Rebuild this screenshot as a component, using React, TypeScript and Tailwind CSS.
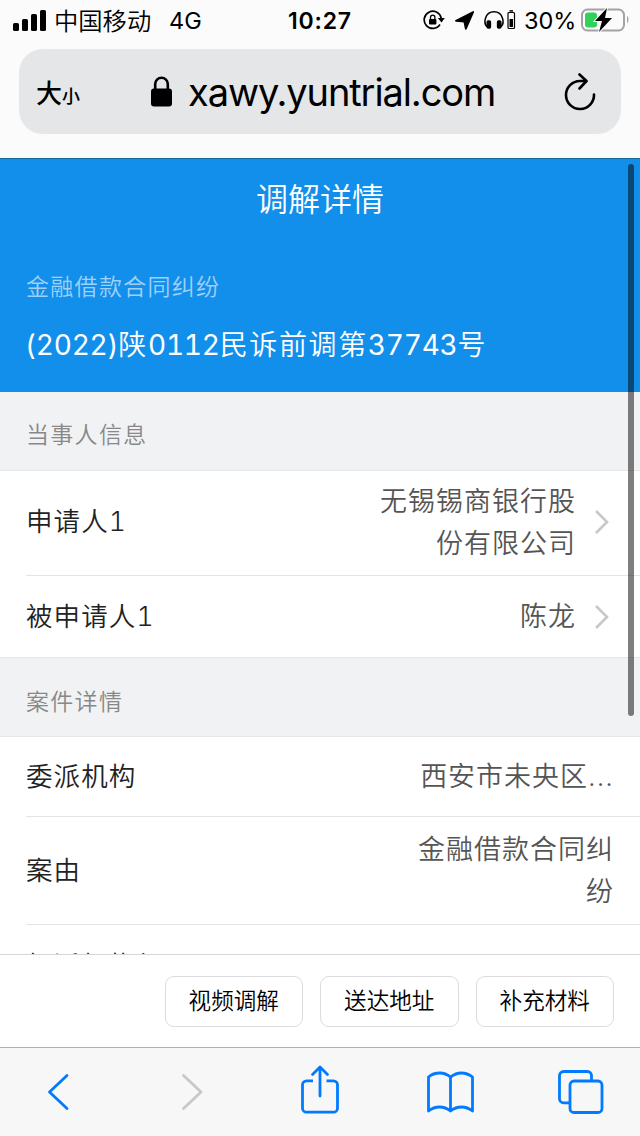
import React from "react"

interface CellProps {
  label: string
  value: string
  arrow?: boolean
  className: string
  last?: boolean
}

const Cell: React.FC<CellProps> = ({ label, value, arrow, className, last }) => (
  <div className="pl-[26px] bg-white">
    <div className={`flex items-center justify-between pr-[26px] ${last ? "" : "border-b border-[#e4e4e6]"} ${className}`}>
      <span className="text-[26.5px] tracking-[1.1px] text-[#222222] tabular-nums">{label}</span>
      <div className="flex items-center">
        <span className="w-[200px] pt-px text-right text-[27px] leading-[42px] tracking-[1px] text-[#555555]">
          {value}
        </span>
        {arrow && (
          <svg className="ml-[18px] mr-[4px]" width="16" height="26" viewBox="0 0 16 26" fill="none" stroke="#c7c7cc" strokeWidth="2.6">
            <path d="M2 2l11 11L2 24" />
          </svg>
        )}
      </div>
    </div>
  </div>
)

const SectionTitle: React.FC<{ title: string; className: string }> = ({ title, className }) => (
  <h2 className={`flex items-center bg-[#f1f2f4] border-b border-[#e6e7e9] pl-[26px] text-[23px] tracking-[1.3px] text-[#888888] ${className}`}>
    {title}
  </h2>
)

const StatusBar = () => (
  <div className="flex h-10 items-center pl-[13px] pr-[11px]">
    <svg width="33" height="21" viewBox="0 0 33 21" fill="#000">
      <rect x="0" y="13" width="6" height="8" rx="1.6" />
      <rect x="9" y="9" width="6" height="12" rx="1.6" />
      <rect x="18" y="4" width="6" height="17" rx="1.6" />
      <rect x="27" y="0" width="6" height="21" rx="1.6" />
    </svg>
    <span className="ml-[8px] w-[108px] shrink-0 pt-[2px] text-[24.3px] font-[350]">中国移动</span>
    <span className="w-[126px] shrink-0 pt-[2px] pl-[7px] text-[23.5px]">4G</span>
    <span className="w-[134px] shrink-0 pt-[2px] text-[23px] font-semibold tracking-[0.8px]">10:27</span>
    <div className="flex shrink-0 items-center">
      <svg className="ml-[1px]" width="23" height="20" viewBox="0 0 23 20" fill="none" stroke="#000" strokeWidth="1.7">
        <path d="M17 14.5A8.6 8.6 0 1 1 18.2 8" />
        <path d="M14.8 8h7l-3.3 4.6z" fill="#000" stroke="none" />
        <rect x="6" y="9" width="7.4" height="5.5" rx="1" fill="#000" stroke="none" />
        <path d="M7.5 9V7.4a2.2 2.2 0 0 1 4.4 0V9" strokeWidth="1.3" />
      </svg>
      <svg className="ml-[9px]" width="20" height="19" viewBox="0 0 20 19">
        <path d="M18.2 1L1 9.8l8.3.7 1.5 7.300z" fill="#000" stroke="#000" strokeWidth="1.8" strokeLinejoin="round" />
      </svg>
      <svg className="ml-[9px]" width="32" height="20" viewBox="0 0 32 20" fill="none" stroke="#000" strokeWidth="1.5">
        <path d="M3.5 17C-1 14 .5 1.8 10 1.8S21 14 16.5 17" />
        <rect x="3.2" y="11" width="3.2" height="7" rx="1" fill="#000" />
        <rect x="13.6" y="11" width="3.2" height="7" rx="1" fill="#000" />
        <rect x="24" y="2.5" width="6.5" height="16" rx="1" strokeWidth="1.2" />
        <path d="M25.5 .9h3.5" />
        <rect x="25.5" y="9" width="3.5" height="8" fill="#000" stroke="none" />
      </svg>
    </div>
    <span className="ml-[8px] shrink-0 pt-[2px] text-[23.5px] tracking-[-0.1px]">30%</span>
    <svg className="ml-auto shrink-0" width="48" height="24" viewBox="0 0 48 24">
      <rect x="1" y="1.5" width="42" height="21" rx="5.5" fill="none" stroke="#a3a3a5" strokeWidth="2" />
      <rect x="4" y="4.5" width="12" height="15" rx="3" fill="#32d15b" />
      <path d="M46 8c2 1 2 6 0 7z" fill="#a3a3a5" />
      <path d="M26 0L14 13h7l-3 11L31 10h-7z" fill="#000" stroke="#fafafa" strokeWidth="2" paintOrder="stroke" />
    </svg>
  </div>
)

const AddressBar = () => (
  <div className="mx-[19px] mt-[9px] flex h-[85px] items-center rounded-[24px] bg-[#e5e6e8]">
    <div className="flex w-[132px] items-baseline pt-[3px] pl-[17px] font-medium">
      <span className="text-[26px]">大</span>
      <span className="text-[18px]">小</span>
    </div>
    <svg width="21" height="31" viewBox="0 0 21 31">
      <path d="M4.2 14V8a6.3 6.3 0 0 1 12.6 0v6" fill="none" stroke="#000" strokeWidth="2.6" />
      <rect x="0" y="12.5" width="21" height="18" rx="3" fill="#000" />
    </svg>
    <span className="ml-[16px] pt-[2px] text-[38px] tracking-[-1.1px]">xawy.yuntrial.com</span>
    <svg className="ml-auto mr-[25px]" width="32" height="38" viewBox="0 0 32 38" fill="none" stroke="#000" strokeWidth="2.6" strokeLinecap="round" strokeLinejoin="round">
      <path d="M30 21.5A14 14 0 1 1 16 8h6" />
      <path d="M15.5 1.5L22.5 8l-7 7.5" />
    </svg>
  </div>
)

const actions = ["视频调解", "送达地址", "补充材料"]

const ActionBar = () => (
  <div className="flex h-[93px] items-start justify-end gap-[17px] border-t border-[#d6d6d8] bg-white pt-[21px] pr-[26px]">
    {actions.map(action => (
      <button key={action} className="h-[51px] w-[138.5px] rounded-[9px] border border-[#dcdcde] pb-[2px] text-[22.6px] font-[350] text-black">
        {action}
      </button>
    ))}
  </div>
)

const Toolbar = () => (
  <div className="h-[89px] border-t border-[#b0b0b2] bg-[#f7f7f7]">
    <svg width="640" height="88" viewBox="0 1048 640 88" fill="none" stroke="#007aff" strokeWidth="2.8" strokeLinecap="round" strokeLinejoin="round">
      <path d="M67 1075.5l-17.5 16.5L67 1108.5" />
      <path d="M183.5 1075.5l17.5 16.5-17.5 16.5" stroke="#c8c8ca" />
      <path d="M313 1080.8h-6.5a4 4 0 0 0-4 4v23.4a4 4 0 0 0 4 4h27a4 4 0 0 0 4-4v-23.4a4 4 0 0 0-4-4h-7" strokeLinecap="butt" />
      <path d="M320 1096v-28M312.5 1074.5l7.5-7.5 7.5 7.5" />
      <path d="M450.5 1111V1077q-5-4-10.5-4-7 0-11.5 4v34q5-4 11-4 6 0 11 4 5-4 11-4 6 0 11 4v-34q-5-4-11.5-4-5 0-10.5 4" />
      <path d="M569 1102.8h-5.5a4 4 0 0 1-4-4v-23.3a4 4 0 0 1 4-4h24a4 4 0 0 1 4 4v5.5" strokeLinecap="butt" />
      <rect x="570" y="1081" width="32" height="31.5" rx="4" />
    </svg>
  </div>
)

const App = () => {
  return (
    <div className="flex h-[1136px] w-[640px] flex-col overflow-hidden bg-[#fbfbfb] font-['Inter','Noto_Sans_CJK_SC',sans-serif] text-black">
      <header className="h-[158px] shrink-0">
        <StatusBar />
        <AddressBar />
      </header>

      <main className="relative h-[796px] shrink-0 overflow-hidden font-[350]">
        <div className="h-[234px] border-t border-[#17679f] bg-[#128eeb] text-white">
          <h1 className="pt-[17px] text-center text-[32px] leading-[48px]">调解详情</h1>
          <p className="mt-[46px] pl-[26px] text-[23px] leading-[34px] tracking-[1.3px] text-white/60">金融借款合同纠纷</p>
          <p className="mt-[20px] pl-[25px] text-[28px] leading-[42px] tracking-[1.6px] tabular-nums">
            <span className="font-normal tracking-[-0.2px]">(2022)</span>陕<span className="font-normal tracking-[-0.2px]">0112</span>民诉前调第<span className="font-normal tracking-[-0.2px]">37743</span>号
          </p>
        </div>

        <SectionTitle title="当事人信息" className="h-[79px] pt-[8px]" />
        <Cell label="申请人1" value="无锡锡商银行股份有限公司" arrow className="h-[105px] pb-[2px]" />
        <Cell label="被申请人1" value="陈龙" arrow className="h-[81px]" last />

        <SectionTitle title="案件详情" className="h-[80px] border-t pt-[10px]" />
        <Cell label="委派机构" value="西安市未央区..." className="h-[80px]" />
        <Cell label="案由" value="金融借款合同纠纷" className="h-[108px]" />
        <Cell label="经派机构级" value="" className="h-[82px]" />

        <div className="absolute top-[6px] right-[6px] h-[552px] w-[6px] rounded-full bg-black/50" />
      </main>

      <ActionBar />
      <Toolbar />
    </div>
  )
}

export default App
